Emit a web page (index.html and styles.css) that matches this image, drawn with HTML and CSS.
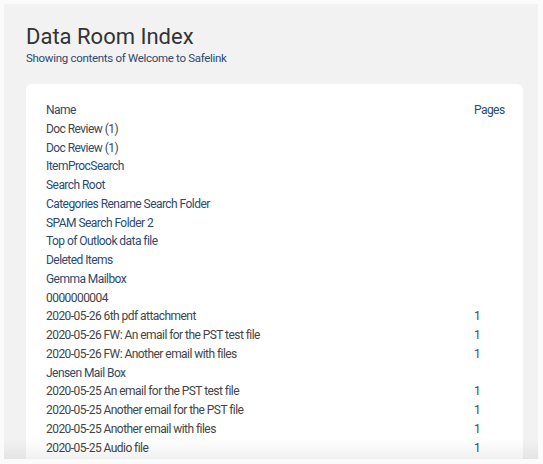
FILE: index.html
```html
<!DOCTYPE html>
<html>
<head>
<meta charset="utf-8">
<link rel="stylesheet" href="styles.css">
</head>
<body>
<div class="panel">
  <h1 class="title">Data Room Index</h1>
  <p class="subtitle">Showing contents of Welcome to Safelink</p>
  <div class="card">
    <div class="row head"><span class="name">Name</span><span class="pages">Pages</span></div>
    <div class="row file"><span class="name">Doc Review (1)</span><span class="pages"></span></div>
    <div class="row"><span class="name">Doc Review (1)</span><span class="pages"></span></div>
    <div class="row"><span class="name">ItemProcSearch</span><span class="pages"></span></div>
    <div class="row"><span class="name">Search Root</span><span class="pages"></span></div>
    <div class="row"><span class="name">Categories Rename Search Folder</span><span class="pages"></span></div>
    <div class="row"><span class="name">SPAM Search Folder 2</span><span class="pages"></span></div>
    <div class="row"><span class="name">Top of Outlook data file</span><span class="pages"></span></div>
    <div class="row"><span class="name">Deleted Items</span><span class="pages"></span></div>
    <div class="row"><span class="name">Gemma Mailbox</span><span class="pages"></span></div>
    <div class="row file"><span class="name">0000000004</span><span class="pages"></span></div>
    <div class="row file"><span class="name">2020-05-26 6th pdf attachment</span><span class="pages">1</span></div>
    <div class="row file"><span class="name">2020-05-26 FW: An email for the PST test file</span><span class="pages">1</span></div>
    <div class="row file"><span class="name">2020-05-26 FW: Another email with files</span><span class="pages">1</span></div>
    <div class="row"><span class="name">Jensen Mail Box</span><span class="pages"></span></div>
    <div class="row file"><span class="name">2020-05-25 An email for the PST test file</span><span class="pages">1</span></div>
    <div class="row file"><span class="name">2020-05-25 Another email for the PST file</span><span class="pages">1</span></div>
    <div class="row file"><span class="name">2020-05-25 Another email with files</span><span class="pages">1</span></div>
    <div class="row file"><span class="name">2020-05-25 Audio file</span><span class="pages">1</span></div>
  </div>
  <div class="fade"></div>
</div>
</body>
</html>
```

FILE: styles.css
```css
html, body {
  margin: 0;
  padding: 0;
  background: #fbfbfb;
  font-family: Roboto, "Noto Sans", sans-serif;
}
.panel {
  position: relative;
  margin: 4px 5px 0 4px;
  height: 455px;
  overflow: hidden;
  background: #f2f2f2;
  padding: 0 15px 0 22px;
  box-sizing: border-box;
}
.title {
  margin: 0;
  padding-top: 19px;
  font-size: 22px;
  line-height: 27px;
  font-weight: 400;
  color: #333333;
}
.subtitle {
  margin: 0;
  font-size: 11.5px;
  line-height: 16px;
  letter-spacing: -0.3px;
  color: #2d4a6d;
}
.card {
  margin-top: 18px;
  background: #ffffff;
  border-radius: 6px;
  padding: 17px 19px 20px 20px;
}
.row {
  display: flex;
  font-size: 12px;
  line-height: 18.75px;
  letter-spacing: -0.55px;
  color: #2d4a6d;
  white-space: nowrap;
}
.row.file .name {
  color: #444444;
}
.name {
  flex: 1;
}
.pages {
  width: 30px;
  padding-left: 1px;
  color: #2d4a6d;
}
.fade {
  position: absolute;
  left: 0;
  right: 0;
  bottom: 0;
  height: 20px;
  background: linear-gradient(rgba(0,0,0,0), rgba(0,0,0,0.06));
}
```
